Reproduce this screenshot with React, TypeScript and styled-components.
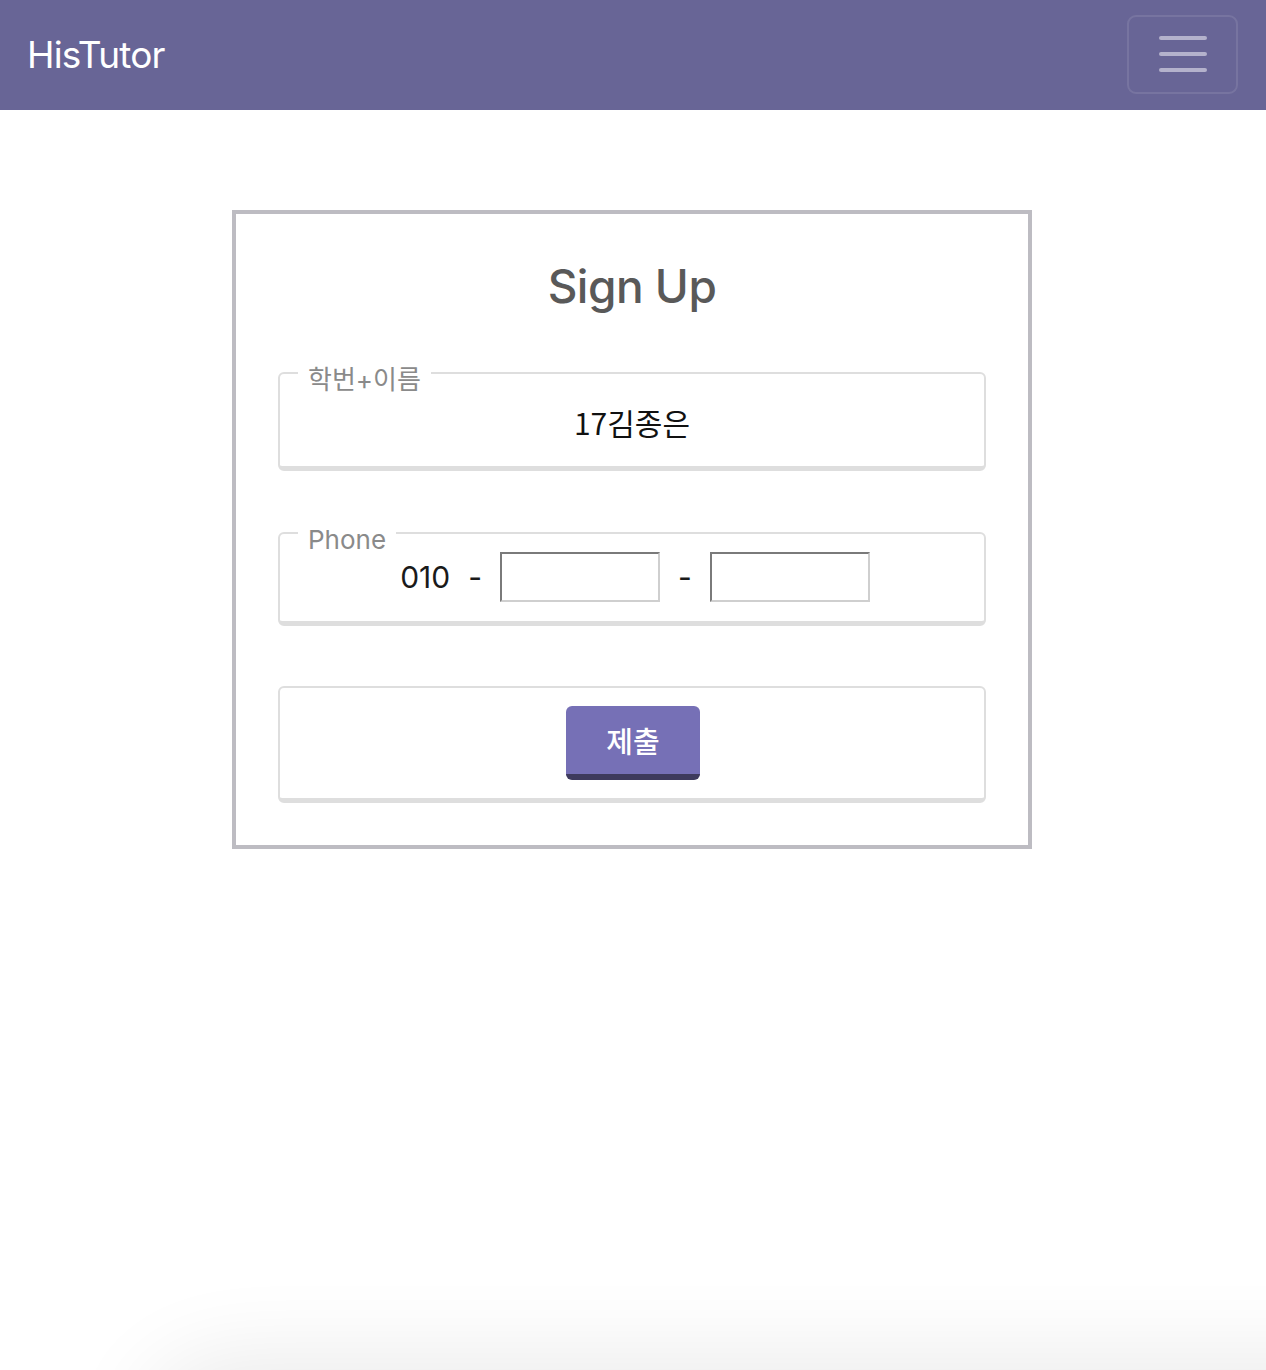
import React from "react";
import styled, { createGlobalStyle } from "styled-components";

const GlobalStyle = createGlobalStyle`
  html, body {
    margin: 0;
    padding: 0;
    background: #ffffff;
    font-family: Inter, "Noto Sans CJK KR", "Noto Sans", sans-serif;
  }
  * { box-sizing: border-box; }
`;

const Page = styled.div`
  min-height: 1370px;
  display: flex;
  flex-direction: column;
`;

const Navbar = styled.nav`
  height: 110px;
  background: #686596;
  display: flex;
  align-items: center;
  justify-content: space-between;
  padding: 0 28px 0 27px;
`;

const Brand = styled.a`
  color: #ffffff;
  font-family: Inter, sans-serif;
  font-size: 37px;
  font-weight: 400;
  letter-spacing: -0.8px;
  text-decoration: none;
  line-height: 1;
  margin-top: -2px;
`;

const Toggler = styled.button`
  width: 111px;
  height: 79px;
  margin-top: -2px;
  border: 2px solid rgba(255, 255, 255, 0.1);
  border-radius: 9px;
  background: transparent;
  display: flex;
  flex-direction: column;
  align-items: center;
  justify-content: center;
  gap: 12px;
  padding: 0;
`;

const TogglerBar = styled.span`
  display: block;
  width: 48px;
  height: 4px;
  border-radius: 2px;
  background: #b4b2cc;
`;

const Card = styled.div`
  width: 800px;
  margin: 100px 0 0 232px;
  border: 4px solid #bdbcc2;
  padding: 42px;
  display: flex;
  flex-direction: column;
`;

const Title = styled.h1`
  margin: 0 0 35px;
  text-align: center;
  font-family: Inter, sans-serif;
  font-size: 46px;
  font-weight: 500;
  letter-spacing: -0.5px;
  line-height: 60px;
  color: #595959;
`;

const Field = styled.fieldset<{ $gap?: number }>`
  margin: ${(p) => p.$gap ?? 0}px 0 0;
  padding: 0 18px;
  border: 2px solid #dedede;
  border-bottom-width: 5px;
  border-radius: 6px;
  min-width: 0;
`;

const Legend = styled.legend`
  padding: 14px 10px 0;
  font-size: 26px;
  line-height: 30px;
  color: #8a8a8a;
  font-family: Inter, "Noto Sans CJK KR", sans-serif;
`;

const NameValue = styled.div`
  padding: 9px 0 26px;
  text-align: center;
  font-size: 30px;
  line-height: 36px;
  color: #111;
  font-family: "Noto Sans CJK KR", sans-serif;
`;

const PhoneRow = styled.div`
  margin-top: -3px;
  padding: 0 0 19px 6px;
  display: flex;
  align-items: center;
  justify-content: center;
  gap: 18px;
`;

const PhoneText = styled.span`
  font-size: 30px;
  line-height: 50px;
  color: #1a1a1a;
  font-family: Inter, sans-serif;
`;

const PhoneInput = styled.input`
  width: 160px;
  height: 50px;
  margin: 0;
  border-style: solid;
  border-width: 2px;
  border-color: #7a7a7a #cfcfcf #cfcfcf #7a7a7a;
  background: #fff;
  font-size: 20px;
  padding: 0 6px;
`;

const SubmitRow = styled.div`
  padding: 18px 0 18px 2px;
  display: flex;
  justify-content: center;
`;

const SubmitButton = styled.button`
  width: 134px;
  height: 74px;
  border: none;
  border-bottom: 6px solid #3e3a5d;
  border-radius: 6px;
  background: #7670b6;
  color: #ffffff;
  font-size: 29px;
  font-weight: 500;
  font-family: "Noto Sans CJK KR", sans-serif;
  padding: 0;
  line-height: 1;
`;

const BottomShade = styled.div`
  position: fixed;
  left: 150px;
  right: -100px;
  bottom: -80px;
  height: 80px;
  border-radius: 80px 0 0 0;
  box-shadow: 0 0 90px 10px rgba(0, 0, 0, 0.09);
  pointer-events: none;
`;

export default function App() {
  return (
    <Page>
      <GlobalStyle />
      <Navbar>
        <Brand href="#">HisTutor</Brand>
        <Toggler aria-label="menu">
          <TogglerBar />
          <TogglerBar />
          <TogglerBar />
        </Toggler>
      </Navbar>
      <Card>
        <Title>Sign Up</Title>
        <Field>
          <Legend>학번+이름</Legend>
          <NameValue>17김종은</NameValue>
        </Field>
        <Field $gap={40}>
          <Legend>Phone</Legend>
          <PhoneRow>
            <PhoneText>010</PhoneText>
            <PhoneText>-</PhoneText>
            <PhoneInput type="text" />
            <PhoneText>-</PhoneText>
            <PhoneInput type="text" />
          </PhoneRow>
        </Field>
        <Field $gap={60}>
          <SubmitRow>
            <SubmitButton>제출</SubmitButton>
          </SubmitRow>
        </Field>
      </Card>
      <BottomShade />
    </Page>
  );
}
